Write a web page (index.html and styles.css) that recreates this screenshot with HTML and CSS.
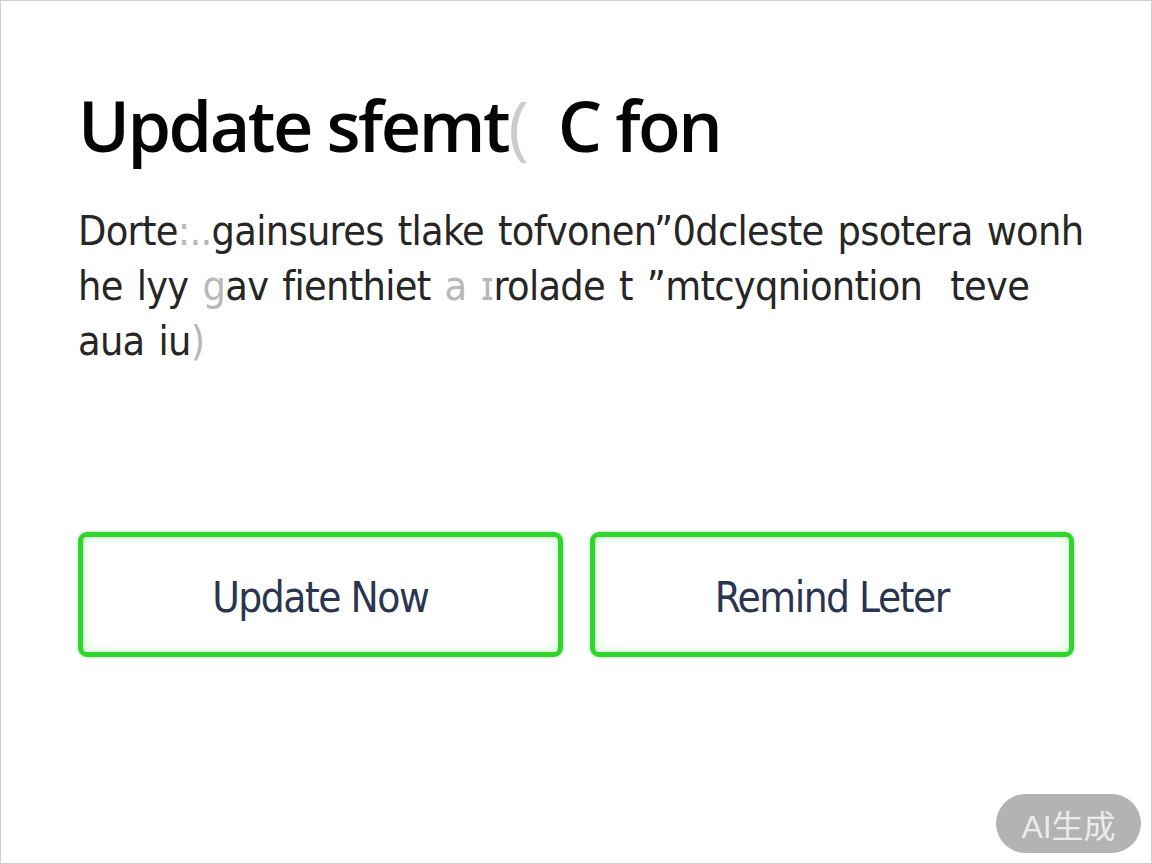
FILE: index.html
```html
<!DOCTYPE html>
<html lang="en">
<head>
<meta charset="utf-8">
<title>Update</title>
<link rel="stylesheet" href="styles.css">
</head>
<body>
<div class="frame">
  <div class="dialog">
    <h1 class="title">Update sfemt<span class="ghost">(</span>&nbsp; C fon</h1>
    <p class="body">Dorte<span class="faint">:..</span>gainsures tlake tofvonen”0dcleste psotera wonh<br>he lyy <span class="faint">g</span>av fienthiet <span class="faint">a ɪ</span>rolade t ”mtcyqniontion&nbsp; teve<br>aua iu<span class="faint">)</span></p>
    <div class="actions">
      <button class="btn">Update Now</button>
      <button class="btn">Remind Leter</button>
    </div>
  </div>
  <div class="badge">AI生成</div>
</div>
</body>
</html>
```
FILE: styles.css
```css
html, body {
  margin: 0;
  padding: 0;
  background: #ffffff;
}
.frame {
  position: relative;
  width: 1152px;
  height: 864px;
  box-sizing: border-box;
  border: 1px solid #cfcfcf;
  background: #ffffff;
  overflow: hidden;
}
.dialog {
  padding: 79px 77px 0 77px;
  display: flex;
  flex-direction: column;
}
.title {
  margin: 0;
  font-family: "Open Sans", "Noto Sans", sans-serif;
  font-weight: 600;
  font-size: 70px;
  line-height: 90px;
  letter-spacing: -2.5px;
  color: #050505;
}
.ghost { color: #cccccc; font-weight: 400; }
.body {
  margin: 34px 0 0 0;
  white-space: nowrap;
  font-family: "DejaVu Sans Condensed", "DejaVu Sans", sans-serif;
  font-stretch: condensed;
  font-size: 41px;
  line-height: 55px;
  letter-spacing: -0.7px;
  word-spacing: 3px;
  color: #262626;
}
.faint { color: #b8b8b8; }
.actions {
  margin-top: 163px;
  display: flex;
  gap: 27px;
}
.btn {
  width: 486px;
  height: 125px;
  box-sizing: border-box;
  border: 5px solid #2ed62c;
  border-radius: 9px;
  background: #ffffff;
  box-shadow: inset 0 0 10px rgba(60, 220, 60, 0.35), 0 0 4px rgba(60, 220, 60, 0.4);
  font-family: "DejaVu Sans Condensed", "DejaVu Sans", sans-serif;
  font-stretch: condensed;
  font-size: 42px;
  letter-spacing: -1.5px;
  color: #2b3450;
  padding: 6px 0 0 0;
}
.badge {
  position: absolute;
  right: 10px;
  bottom: 10px;
  width: 145px;
  height: 59px;
  border-radius: 30px;
  background: #b3b3b3;
  color: #ececec;
  font-family: "Liberation Sans", "Noto Sans CJK SC", sans-serif;
  font-size: 32px;
  display: flex;
  align-items: center;
  justify-content: center;
}
```
